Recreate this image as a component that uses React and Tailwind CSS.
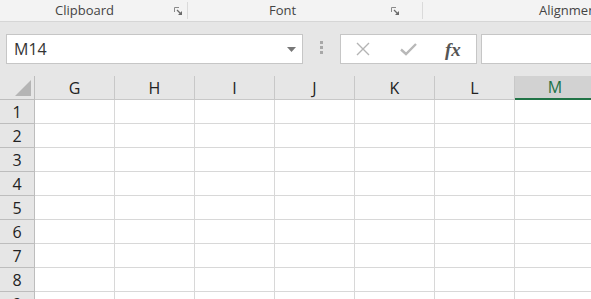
import React from "react";

const cols = ["G", "H", "I", "J", "K", "L", "M"];
const rows = [1, 2, 3, 4, 5, 6, 7, 8, 9];

function Launcher() {
  return (
    <svg width="9" height="9" viewBox="0 0 9 9" className="shrink-0">
      <path d="M0.5 0.5 H5 M0.5 0.5 V5" stroke="#8a8a8a" strokeWidth="1" fill="none" />
      <path d="M3 3 L7 7" stroke="#6a6a6a" strokeWidth="1.2" />
      <path d="M4 8 H8 V4 Z" fill="#6a6a6a" />
    </svg>
  );
}

export default function App() {
  return (
    <div
      className="w-[591px] h-[299px] overflow-hidden bg-[#e6e6e6]"
      style={{ fontFamily: '"Open Sans", "Noto Sans", sans-serif' }}
    >
      {/* Ribbon group labels */}
      <div className="h-[22px] bg-[#f3f3f3] border-b border-[#d6d6d6] flex text-[13px] text-[#444] leading-none">
        <div className="w-[188px] shrink-0 flex items-center border-r border-[#dadada] h-[17px] mt-[2px]">
          <span className="ml-[55px]">Clipboard</span>
          <span className="ml-[60px] mt-[2px]"><Launcher /></span>
        </div>
        <div className="w-[235px] shrink-0 flex items-center border-r border-[#dadada] h-[17px] mt-[2px]">
          <span className="ml-[81px]">Font</span>
          <span className="ml-[95px] mt-[2px]"><Launcher /></span>
        </div>
        <div className="flex items-center h-[17px] mt-[2px]">
          <span className="ml-[116px] whitespace-nowrap">Alignment</span>
        </div>
      </div>

      {/* Formula bar */}
      <div className="h-[54px] flex items-start pt-[12px]">
        <div className="ml-[6px] w-[297px] h-[30px] bg-white border border-[#c6c6c6] flex items-center justify-between pl-[7px] pr-[6px]">
          <span className="text-[16px] text-[#333]">M14</span>
          <svg width="9" height="5" viewBox="0 0 9 5">
            <path d="M0 0 H9 L4.5 5 Z" fill="#777" />
          </svg>
        </div>
        <div className="ml-[17px] mt-[7px] flex flex-col gap-[2px]">
          <div className="w-[3px] h-[3px] bg-[#a8a8a8]" />
          <div className="w-[3px] h-[3px] bg-[#a8a8a8]" />
          <div className="w-[3px] h-[3px] bg-[#a8a8a8]" />
        </div>
        <div className="ml-[17px] w-[137px] h-[30px] bg-white border border-[#c6c6c6] flex items-center">
          <svg width="16" height="16" viewBox="0 0 16 16" className="ml-[14px]">
            <path d="M2 2 L14 14 M14 2 L2 14" stroke="#b4b4b4" strokeWidth="1.4" />
          </svg>
          <svg width="20" height="16" viewBox="0 0 20 16" className="ml-[28px]">
            <path d="M2 8.5 L7 13 L17 3" stroke="#b8b8b8" strokeWidth="2.4" fill="none" />
          </svg>
          <span
            className="ml-[26px] text-[19px] text-[#555] italic font-bold leading-none"
            style={{ fontFamily: '"Liberation Serif", serif' }}
          >
            fx
          </span>
        </div>
        <div className="ml-[4px] flex-1 h-[30px] bg-white border border-[#c6c6c6] border-r-0" />
      </div>

      {/* Grid */}
      <div className="bg-white">
        <div className="flex h-[24px] bg-[#e6e6e6]">
          <div className="w-[35px] shrink-0 border-r border-b border-[#bdbdbd] relative">
            <svg width="17" height="16" viewBox="0 0 17 16" className="absolute left-[15px] top-[4px]">
              <path d="M16 0 V16 H0 Z" fill="#b5b5b5" />
            </svg>
          </div>
          {cols.map((c) =>
            c === "M" ? (
              <div
                key={c}
                className="w-[80px] shrink-0 bg-[#d2d2d2] border-b-2 border-[#217346] flex items-center justify-center text-[16px] text-[#217346]"
              >
                {c}
              </div>
            ) : (
              <div
                key={c}
                className="w-[80px] shrink-0 border-r border-b border-[#c8c8c8] flex items-center justify-center text-[16px] text-[#222]"
              >
                {c}
              </div>
            )
          )}
        </div>
        {rows.map((r) => (
          <div key={r} className="flex h-[24px]">
            <div className="w-[35px] shrink-0 bg-[#e6e6e6] border-r border-b border-[#bdbdbd] flex items-center justify-center text-[16px] text-[#222]">
              {r}
            </div>
            {cols.map((c) => (
              <div key={c} className="w-[80px] shrink-0 border-r border-b border-[#d8d8d8]" />
            ))}
          </div>
        ))}
      </div>
    </div>
  );
}
